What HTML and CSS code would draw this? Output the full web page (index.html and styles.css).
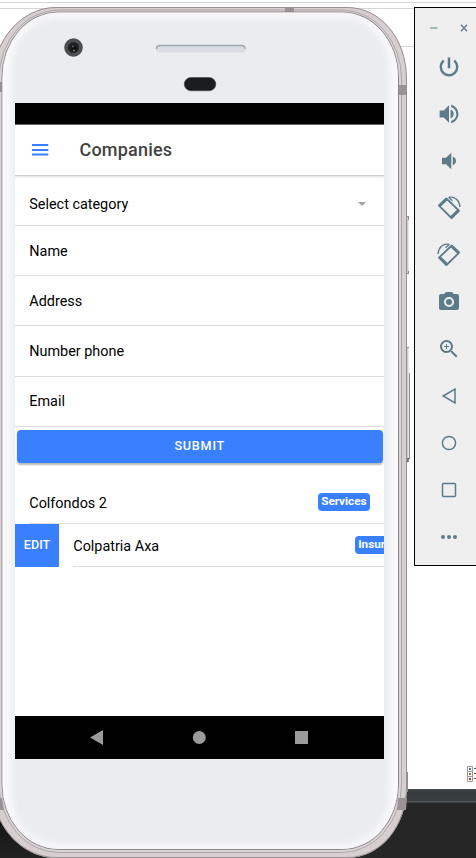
FILE: index.html
```
<!DOCTYPE html>
<html lang="en">
<head>
<meta charset="utf-8">
<title>Companies</title>
<link rel="stylesheet" href="styles.css">
</head>
<body>
<svg class="backdrop" width="476" height="858" viewBox="0 0 476 858" aria-hidden="true">
  <defs>
    <linearGradient id="face" x1="0" y1="0" x2="1" y2="0">
      <stop offset="0" stop-color="#f7f7f9"/><stop offset=".02" stop-color="#f3f4f6"/><stop offset=".04" stop-color="#ebecee"/>
      <stop offset=".96" stop-color="#ebecee"/><stop offset=".98" stop-color="#f1f2f4"/><stop offset="1" stop-color="#f5f6f8"/>
    </linearGradient>
    <linearGradient id="floor" x1="0" y1="0" x2="0" y2="1"><stop offset="0" stop-color="#080808"/><stop offset="1" stop-color="#222"/></linearGradient>
    <linearGradient id="shelf" x1="0" y1="0" x2="0" y2="1"><stop offset="0" stop-color="#454b4e"/><stop offset=".25" stop-color="#363b3d"/><stop offset="1" stop-color="#3b4042"/></linearGradient>
    <filter id="soft" x="-5%" y="-5%" width="110%" height="110%"><feGaussianBlur stdDeviation="3"/></filter>
    <clipPath id="faceclip"><rect x="2.5" y="12.5" width="395.5" height="836.5" rx="56" ry="65"/></clipPath>
  </defs>
  <path d="M0 2.5H476M0 8.5H414M400 46.5H414" stroke="#d5d5d7"/>
  <path d="M0 780H60V858H0Z" fill="url(#floor)"/>
  <path d="M340 803H476V858H340Z" fill="#262626"/>
  <path d="M380 789H476V803H380Z" fill="url(#shelf)"/>
  <path d="M380 801.5H476" stroke="#515557"/>
  <g fill="#fff" stroke="#999"><path d="M467.5 766.500h5v5h-5zM467.500 771.500h5v5h-5zM467.500 776.500h5v5h-5z"/></g>
  <path d="M469 768h2v2h-2z" fill="#4d7890"/><path d="M469 773h2v2h-2z" fill="#7b7d29"/><path d="M469 778h2v2h-2z" fill="#b43224"/>
  <path d="M474 768.500h2M474 773.500h2M474 778.500h2" stroke="#555"/>
  <path d="M406 217h2.500v56H406zM406 347h2.500v115H406z" fill="#c9cccd"/>
  <path d="M408.500 217v3M408.500 271v2M409.500 373v86M407 216.500h2M407 273.500h2M407 347.500h2M407 461.500h2M407.500 772v20" fill="none" stroke="#8e8c8c"/>
  <path d="M406 458h4l-3 5h-1z" fill="#77716f"/>
  <path d="M56 7H347C381 7 407 39 407 79V786C407 826 381 858 347 858H56C22 858-8 826-8 786V82C-8 40 22 7 56 7Z" fill="#d6cecf"/>
  <path d="M56 7.500H347C381 7.500 406.500 39 406.500 79V786C406.500 826 381 857.500 347 857.500H56C22 857.500-7.500 826-7.500 786V82C-7.500 40 22 7.500 56 7.500Z" fill="none" stroke="#989093"/>
  <rect x="-1" y="10" width="402.500" height="842.500" rx="60" ry="69" fill="#dbd4d6" stroke="#a29a9d" stroke-width=".8"/>
  <path d="M285 7h9v5h-9zM398 85h9v10h-9zM0 82h2v10h-2zM398 798h9l-1 12h-9zM0 798h2l2 12H0z" fill="#9b9295"/>
  <rect x="2" y="12" width="396.500" height="837.500" rx="56" ry="65" fill="url(#face)" stroke="#8c8689"/>
  <g clip-path="url(#faceclip)"><rect x="4" y="14" width="392.500" height="834" rx="55" ry="64" fill="none" stroke="#f9f9fb" stroke-width="8" filter="url(#soft)"/></g>
  <circle cx="73.500" cy="47.500" r="9.300" fill="#4d4e52"/><circle cx="73.500" cy="47.500" r="5.500" fill="#202126"/><circle cx="74" cy="48.500" r="2.600" fill="#0d0d0f"/>
  <circle cx="73" cy="46.500" r="1" fill="#555f78"/><circle cx="74" cy="50.500" r="1" fill="#8b863b"/>
  <rect x="156" y="45" width="89.500" height="7.500" rx="3.700" fill="#d9dce0"/>
  <path d="M156.500 49q0-3.500 3.500-3.500H242q3 0 3 3.500" fill="none" stroke="#9da5af" stroke-width="1.300"/>
  <rect x="184.300" y="77.500" width="31.500" height="13.300" rx="6.600" fill="#1b1c20" stroke="#48484c" stroke-width=".6"/>
</svg>

<div class="desktop">
  <main class="screen">
    <div class="statusbar"></div>
    <header class="header">
      <svg width="18" height="12" viewBox="0 0 18 12" aria-label="Menu"><path d="M1 1H17.300M1 6H17.300M1 10.500H17.300" stroke="#3880ff" stroke-width="1.900"/></svg>
      <h1>Companies</h1>
    </header>
    <form class="form">
      <div class="field field-select">Select category<span class="caret"></span></div>
      <div class="field field-low">Name</div>
      <div class="field field-low">Address</div>
      <div class="field field-phone">Number phone</div>
      <div class="field">Email</div>
      <button type="button" class="submit">SUBMIT</button>
    </form>
    <section class="list">
      <div class="row"><div class="item"><span>Colfondos 2</span><span class="badge">Services</span></div></div>
      <div class="row row-open"><div class="edit">EDIT</div><div class="item"><span>Colpatria Axa</span><span class="badge">Insurance</span></div></div>
    </section>
    <nav class="navbar">
      <svg width="369" height="43" viewBox="0 0 369 43" fill="#9b9b9b"><path d="M75 21.500L88 14V29ZM280 15h13v13h-13z"/><circle cx="184.300" cy="21.500" r="6.500"/></svg>
    </nav>
  </main>
  <aside class="tools">
    <div class="window-buttons">
      <svg width="8" height="10" viewBox="0 0 8 10"><path d="M0 5h7.500" stroke="#94a8b0" stroke-width="1.600"/></svg>
      <svg width="8" height="10" viewBox="0 0 8 10"><path d="M1 1.800l6 6.400M7 1.800l-6 6.400" stroke="#5d7c89" stroke-width="1.300"/></svg>
    </div>
    <svg class="tool" viewBox="0.500 0.500 23 23"><path d="M13.200 2.800h-2.400v10.400h2.400zm4.630 2.370-1.600 1.600A6.700 6.700 0 0 1 18.700 12a6.700 6.700 0 1 1-10.930-5.230L6.170 5.170A8.930 8.930 0 0 0 3 12a9 9 0 0 0 18 0c0-2.740-1.230-5.180-3.170-6.830z"/></svg>
    <svg class="tool" viewBox="0.500 0.500 23 23"><path d="M3 8.600v6.800h4l5 5V3.600L7 8.600H3zm13.500 3.400A4.500 4.500 0 0 0 13.500 7.700v8.600c1.700-.6 3-2.250 3-4.300zM14 3.230v2.060c2.890.86 5 3.540 5 6.710s-2.110 5.850-5 6.710v2.060c4.010-.91 7-4.490 7-8.770s-2.990-7.860-7-8.770z"/></svg>
    <svg class="tool" viewBox="0 0 24 24"><path d="M5 8.800v6.400h4l5.300 5V3.800L9 8.800H5zm14 3.200A4.500 4.500 0 0 0 15.800 7.800v8.400c1.800-.6 3.200-2.200 3.200-4.200z"/></svg>
    <svg class="tool" viewBox="0 0 24 24"><g fill="none" stroke="#5d7c89"><path d="M9.300 2.500L1.900 9.700L14.500 22L22 14.700Z" stroke-width="1.800" stroke-linejoin="round"/><path d="M9.600 3L2.300 10M21.500 14.300L14 21.600" stroke-width="3"/><path d="M12 1.300C18 .3 22.500 4.500 23 11M11.500 1.200l4 3.600" stroke-width="1.400"/></g></svg>
    <svg class="tool" viewBox="0 0 24 24"><g transform="matrix(-1 0 0 1 24 0)" fill="none" stroke="#5d7c89"><path d="M9.300 2.500L1.900 9.700L14.500 22L22 14.700Z" stroke-width="1.800" stroke-linejoin="round"/><path d="M9.600 3L2.300 10M21.500 14.300L14 21.600" stroke-width="3"/><path d="M12 1.300C18 .3 22.500 4.500 23 11M11.500 1.200l4 3.600" stroke-width="1.400"/></g></svg>
    <svg class="tool" viewBox="0 1 24 24"><path fill-rule="evenodd" d="M9 3 7.170 5H4a2 2 0 0 0-2 2v12c0 1.100.9 2 2 2h16a2 2 0 0 0 2-2V7a2 2 0 0 0-2-2h-3.170L15 3H9zm3 15a5 5 0 1 1 0-10 5 5 0 0 1 0 10zm0-2a3 3 0 1 0 0-6 3 3 0 0 0 0 6z"/></svg>
    <svg class="tool" viewBox="0 0 24 24"><path d="M15.500 14h-.79l-.28-.27A6.500 6.500 0 1 0 13.730 14.430l.27.28v.79l5 4.990L20.490 19l-4.990-5zm-6 0a4.500 4.500 0 1 1 0-9 4.500 4.500 0 0 1 0 9zM12 9.900h-2v2H9v-2H7V8.900h2V7h1v1.900h2z"/></svg>
    <svg class="tool" viewBox="0 0 24 24"><path d="M6.200 12L18 5V19Z" fill="none" stroke="#5d7c89" stroke-width="1.500"/></svg>
    <svg class="tool" viewBox="0 0 24 24"><circle cx="12" cy="12" r="6.600" fill="none" stroke="#5d7c89" stroke-width="1.500"/></svg>
    <svg class="tool" viewBox="0 0 24 24"><rect x="5.500" y="5.500" width="13" height="13" rx="1" fill="none" stroke="#5d7c89" stroke-width="1.500"/></svg>
    <svg class="tool" viewBox="0 0 24 24"><circle cx="6" cy="12" r="2"/><circle cx="12" cy="12" r="2"/><circle cx="18" cy="12" r="2"/></svg>
  </aside>
</div>
</body>
</html>
```
FILE: styles.css
```
* { box-sizing: border-box; }
body {
  margin: 0;
  width: 476px;
  height: 858px;
  overflow: hidden;
  position: relative;
  background: #fff;
  color: #000;
  font-family: Roboto, sans-serif;
  font-size: 14.4px;
}
svg { display: block; flex: none; }
.backdrop { position: absolute; left: 0; top: 0; }
.desktop {
  position: relative;
  display: flex;
  align-items: flex-start;
  gap: 30px;
  padding: 7px 0 0 15px;
}
.screen {
  display: flex;
  flex-direction: column;
  width: 369px;
  height: 656px;
  margin-top: 96px;
  background: #fff;
  overflow: hidden;
  flex: none;
}
.statusbar { height: 22px; background: #000; border-bottom: 1px solid #666; flex: none; }
.header {
  display: flex;
  align-items: center;
  gap: 31px;
  height: 51px;
  padding-left: 16px;
  border-bottom: 1px solid #d0d0d0;
  box-shadow: 0 1px 2px rgba(0, 0, 0, .14);
  flex: none;
}
h1 { margin: -2px 0 0 -.5px; font-size: 18px; font-weight: 500; letter-spacing: .2px; color: #424242; }
.form { display: flex; flex-direction: column; padding-top: 5px; }
.field {
  display: flex;
  align-items: center;
  justify-content: space-between;
  height: 50px;
  padding: 0 14px 0 14.3px;
  border-bottom: 1px solid #dedede;
}
.field-low { padding-top: 2px; }
.field-select { height: 45px; padding-top: 2px; }
.field-phone { height: 51px; }
.caret { border: 4.5px solid transparent; border-top-color: #a3a3a3; border-bottom: 0; margin-right: 4px; }
.submit {
  height: 33px;
  margin: 3px 1.5px 0 2px;
  padding: 0 0 2px;
  border: 0;
  border-radius: 4px;
  background: #3880ff;
  color: #fff;
  font: 500 12.6px Roboto, sans-serif;
  letter-spacing: .8px;
  box-shadow: 0 2px 2px rgba(0, 0, 0, .28);
}
.list { padding-top: 18px; }
.row { display: flex; height: 43px; }
.item {
  display: flex;
  align-items: center;
  justify-content: space-between;
  width: 355px;
  flex: none;
  margin-left: 14px;
  padding: 2px 14px 0 .3px;
  border-bottom: 1px solid #dedede;
}
.edit {
  width: 44px;
  flex: none;
  display: flex;
  align-items: center;
  justify-content: center;
  padding-bottom: 2px;
  background: #3880ff;
  color: #fff;
  font-size: 12.6px;
  font-weight: 500;
}
.badge {
  height: 18px;
  padding: 0 3.5px;
  margin-top: -3px;
  border-radius: 4px;
  background: #3880ff;
  color: #fff;
  font-size: 11.7px;
  font-weight: 700;
  line-height: 16px;
}
.row-open .badge { margin-right: .5px; }
.navbar { height: 43px; margin-top: auto; background: #000; flex: none; }
.tools {
  display: flex;
  flex-direction: column;
  align-items: center;
  width: 70px;
  height: 559px;
  flex: none;
  border: 1px solid #000;
  background: #efefef;
}
.window-buttons { display: flex; gap: 22px; height: 35px; padding-top: 15px; }
.tool { width: 24px; height: 24px; margin: 11.5px 0; fill: #5d7c89; }
```
